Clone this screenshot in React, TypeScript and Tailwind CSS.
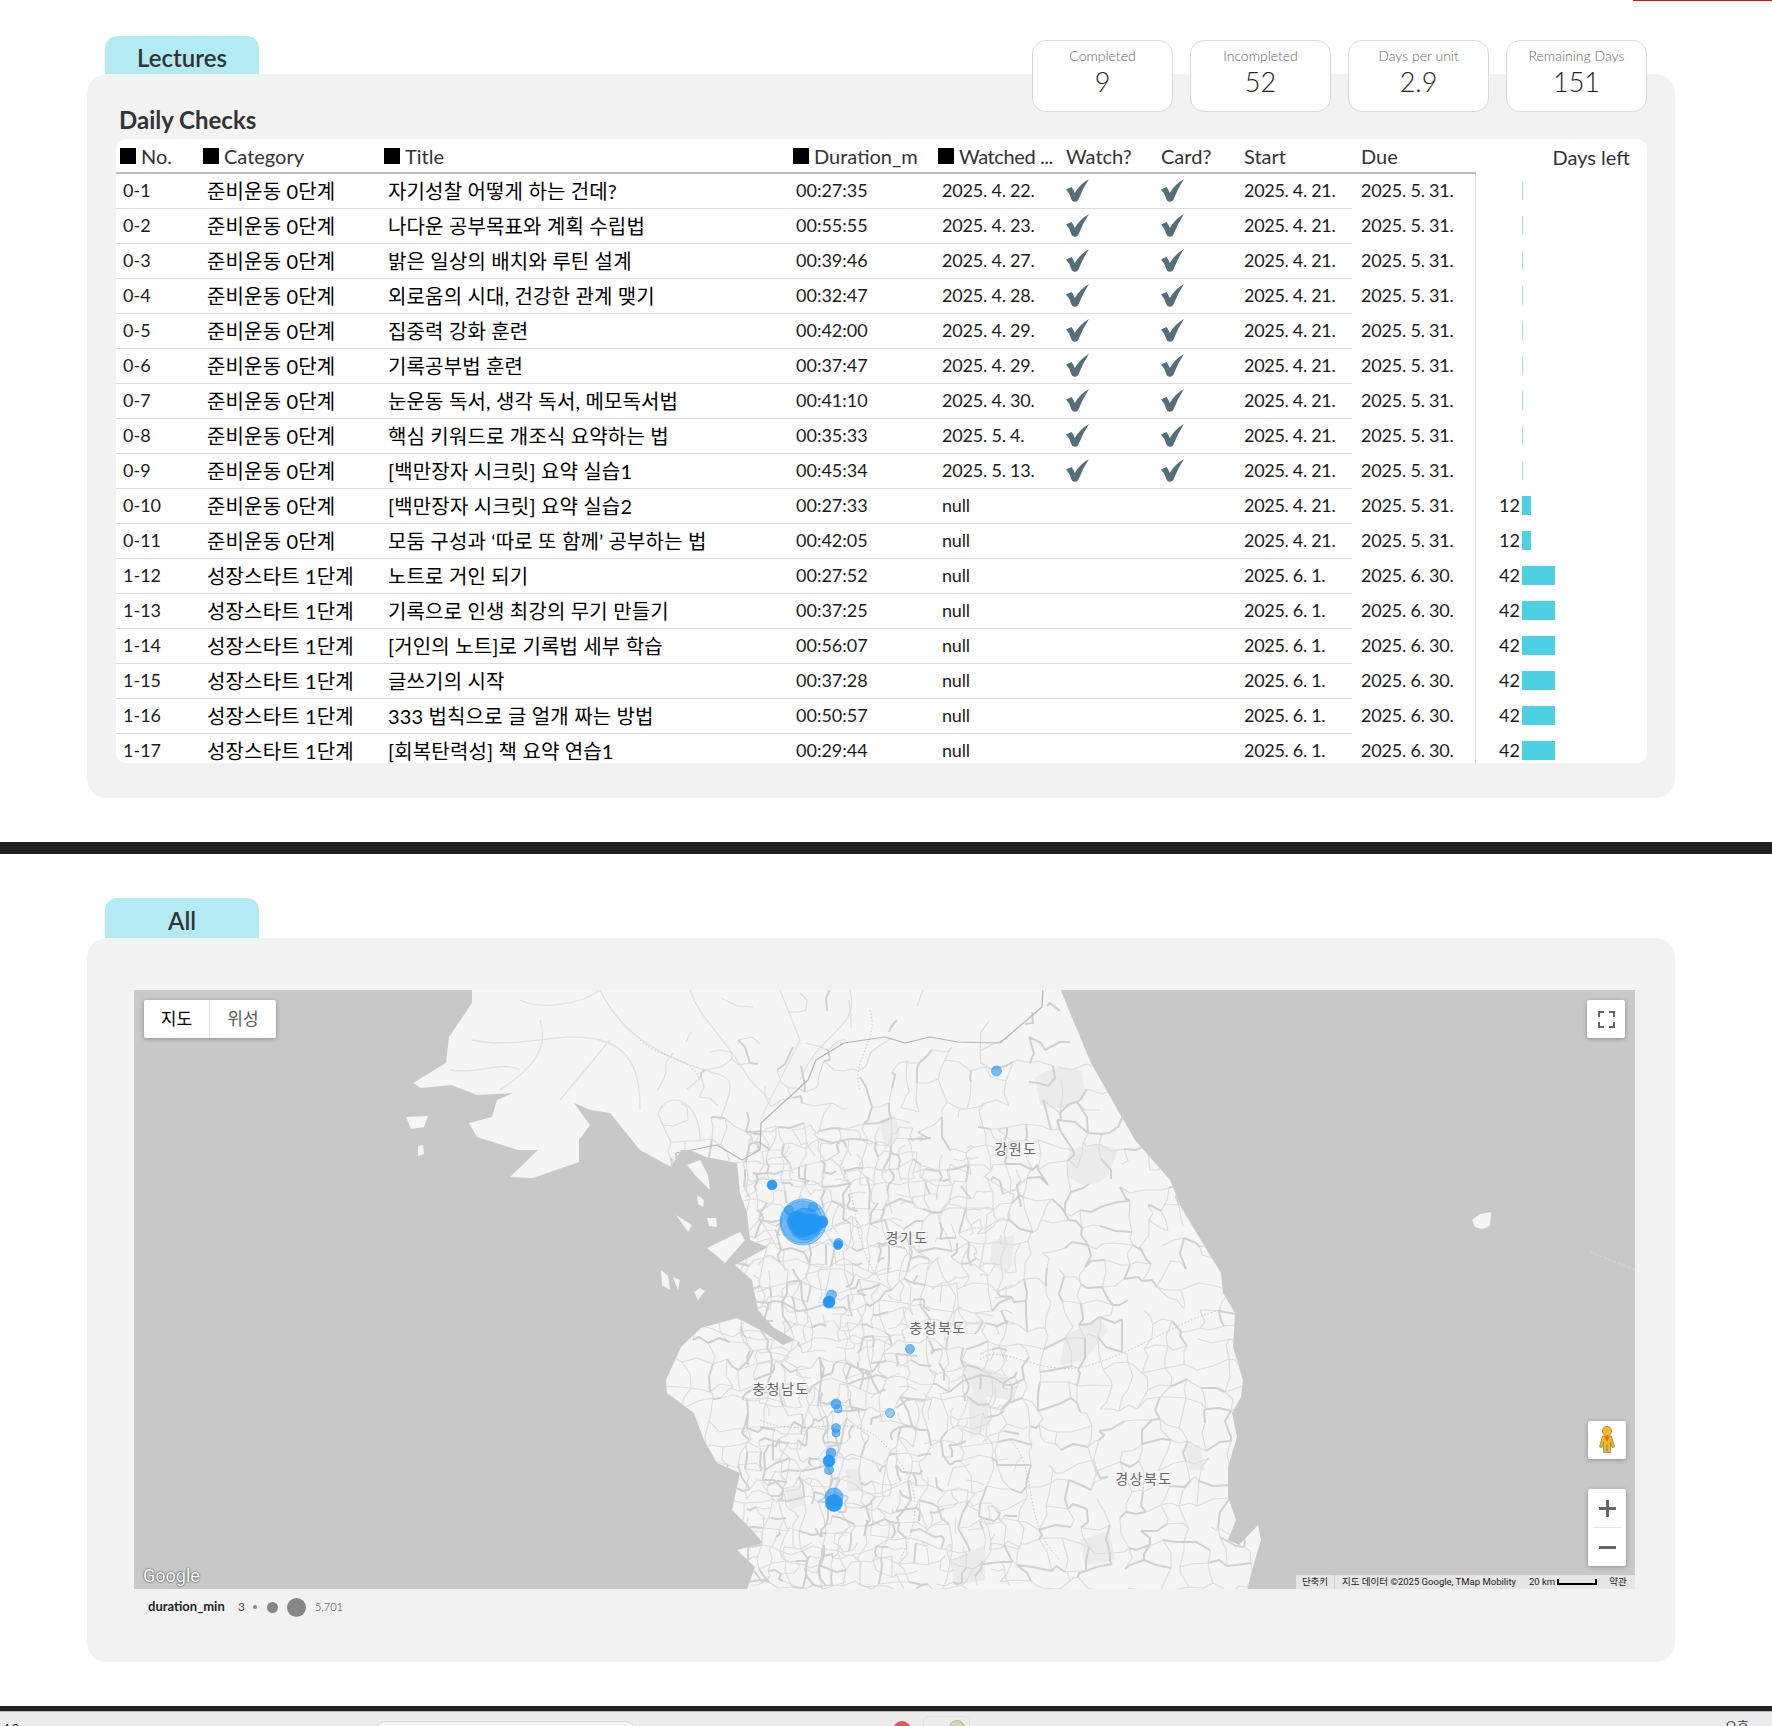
const rows: [string, string, string, string, string, boolean, string, string, number][] = [
  ['0-1', '준비운동 0단계', '자기성찰 어떻게 하는 건데?', '00:27:35', '2025. 4. 22.', true, '2025. 4. 21.', '2025. 5. 31.', 0],
  ['0-2', '준비운동 0단계', '나다운 공부목표와 계획 수립법', '00:55:55', '2025. 4. 23.', true, '2025. 4. 21.', '2025. 5. 31.', 0],
  ['0-3', '준비운동 0단계', '밝은 일상의 배치와 루틴 설계', '00:39:46', '2025. 4. 27.', true, '2025. 4. 21.', '2025. 5. 31.', 0],
  ['0-4', '준비운동 0단계', '외로움의 시대, 건강한 관계 맺기', '00:32:47', '2025. 4. 28.', true, '2025. 4. 21.', '2025. 5. 31.', 0],
  ['0-5', '준비운동 0단계', '집중력 강화 훈련', '00:42:00', '2025. 4. 29.', true, '2025. 4. 21.', '2025. 5. 31.', 0],
  ['0-6', '준비운동 0단계', '기록공부법 훈련', '00:37:47', '2025. 4. 29.', true, '2025. 4. 21.', '2025. 5. 31.', 0],
  ['0-7', '준비운동 0단계', '눈운동 독서, 생각 독서, 메모독서법', '00:41:10', '2025. 4. 30.', true, '2025. 4. 21.', '2025. 5. 31.', 0],
  ['0-8', '준비운동 0단계', '핵심 키워드로 개조식 요약하는 법', '00:35:33', '2025. 5. 4.', true, '2025. 4. 21.', '2025. 5. 31.', 0],
  ['0-9', '준비운동 0단계', '[백만장자 시크릿] 요약 실습1', '00:45:34', '2025. 5. 13.', true, '2025. 4. 21.', '2025. 5. 31.', 0],
  ['0-10', '준비운동 0단계', '[백만장자 시크릿] 요약 실습2', '00:27:33', 'null', false, '2025. 4. 21.', '2025. 5. 31.', 12],
  ['0-11', '준비운동 0단계', '모둠 구성과 ‘따로 또 함께’ 공부하는 법', '00:42:05', 'null', false, '2025. 4. 21.', '2025. 5. 31.', 12],
  ['1-12', '성장스타트 1단계', '노트로 거인 되기', '00:27:52', 'null', false, '2025. 6. 1.', '2025. 6. 30.', 42],
  ['1-13', '성장스타트 1단계', '기록으로 인생 최강의 무기 만들기', '00:37:25', 'null', false, '2025. 6. 1.', '2025. 6. 30.', 42],
  ['1-14', '성장스타트 1단계', '[거인의 노트]로 기록법 세부 학습', '00:56:07', 'null', false, '2025. 6. 1.', '2025. 6. 30.', 42],
  ['1-15', '성장스타트 1단계', '글쓰기의 시작', '00:37:28', 'null', false, '2025. 6. 1.', '2025. 6. 30.', 42],
  ['1-16', '성장스타트 1단계', '333 법칙으로 글 얼개 짜는 방법', '00:50:57', 'null', false, '2025. 6. 1.', '2025. 6. 30.', 42],
  ['1-17', '성장스타트 1단계', '[회복탄력성] 책 요약 연습1', '00:29:44', 'null', false, '2025. 6. 1.', '2025. 6. 30.', 42],
];

const stats = [
  ['Completed', '9'],
  ['Incompleted', '52'],
  ['Days per unit', '2.9'],
  ['Remaining Days', '151'],
];

const LAND =
  'M472 985 L1059 985 L1070 1013 L1091 1063 L1116 1107 L1135 1140 L1170 1180 L1181 1207 L1205 1247 L1221 1273 L1223 1293 L1235 1313 L1233 1347 L1243 1380 L1241 1397 L1232 1413 L1237 1437 L1228 1467 L1228 1497 L1236 1520 L1228 1540 L1239 1545 L1258 1525 L1261 1540 L1252 1570 L1246 1595 L745 1595 L755 1567 L737 1550 L763 1543 L752 1530 L732 1510 L740 1473 L717 1463 L704 1440 L694 1413 L667 1393 L666 1380 L681 1347 L701 1328 L737 1318 L760 1330 L783 1345 L795 1340 L773 1327 L758 1310 L752 1280 L735 1265 L768 1247 L750 1240 L747 1213 L740 1193 L737 1163 L706 1157 L690 1150 L681 1150 L671 1167 L640 1150 L610 1113 L590 1110 L574 1103 L590 1125 L579 1140 L579 1162 L533 1178 L510 1177 L538 1150 L518 1150 L477 1137 L469 1123 L492 1117 L497 1100 L513 1093 L477 1095 L451 1085 L421 1088 L413 1083 L446 1063 L449 1037 L472 1003 Z';

// small islands off the coast, hand-placed
const ISLANDS = [
  'M1472 1220 L1480 1214 L1491 1212 L1490 1226 L1482 1229 L1475 1227 Z',
  'M406 1117 L428 1116 L424 1127 L411 1129 Z',
  'M418 1146 L423 1145 L424 1154 L418 1156 Z',
  'M707 1218 L716 1218 L717 1227 L709 1226 Z',
  'M707 1248 L740 1232 L745 1240 L725 1263 Z',
  'M661 1270 L668 1276 L670 1290 L662 1285 Z',
  'M673 1277 L680 1280 L678 1290 Z',
  'M694 1292 L700 1288 L705 1291 L698 1300 Z',
  'M687 1165 L700 1160 L708 1175 L710 1190 L695 1175 Z',
  'M697 1195 L704 1200 L703 1207 L698 1204 Z',
  'M676 1215 L692 1225 L688 1232 Z',
];

const PARKS = [
  'M1035 1078 Q1060 1060 1082 1072 L1085 1095 Q1068 1115 1040 1105 Z',
  'M1070 1150 Q1100 1140 1118 1150 L1108 1175 Q1090 1195 1066 1175 Z',
  'M992 1240 L1014 1235 L1012 1265 L1005 1275 L990 1262 Z',
  'M1065 1335 L1100 1318 L1108 1330 L1085 1360 L1060 1365 Z',
  'M880 1120 L895 1115 L900 1135 L885 1150 Z',
  'M960 1360 L1005 1375 L1010 1400 L975 1395 Z',
  'M968 1395 L985 1385 L990 1425 L970 1440 Z',
  'M1185 1445 L1200 1445 L1205 1470 L1190 1470 Z',
  'M785 1488 L800 1485 L805 1505 L790 1510 Z',
  'M845 1470 L860 1468 L862 1490 L848 1492 Z',
  'M1080 1540 L1110 1530 L1115 1560 L1085 1565 Z',
  'M950 1560 L985 1545 L985 1580 L955 1585 Z',
];

// road web: jittered grids clipped to the land, densest in the west-centre
function buildRoads() {
  let seed = 4711;
  const rnd = () => {
    seed = (seed + 0x6d2b79f5) | 0;
    let t = Math.imul(seed ^ (seed >>> 15), 1 | seed);
    t = (t + Math.imul(t ^ (t >>> 7), 61 | t)) ^ t;
    return ((t ^ (t >>> 14)) >>> 0) / 4294967296;
  };
  const major: string[] = [];
  const minor: string[] = [];
  const seg = (a: [number, number], b: [number, number], wob: number) => {
    const mx = (a[0] + b[0]) / 2 + (rnd() - 0.5) * wob;
    const my = (a[1] + b[1]) / 2 + (rnd() - 0.5) * wob;
    return `M${a[0].toFixed(0)} ${a[1].toFixed(0)} L${mx.toFixed(0)} ${my.toFixed(0)} L${b[0].toFixed(0)} ${b[1].toFixed(0)}`;
  };
  const grid = (x0: number, y0: number, cols: number, lines: number, step: number, keep: (x: number, y: number) => number) => {
    const pts: [number, number][][] = [];
    for (let r = 0; r < lines; r++) {
      const row: [number, number][] = [];
      for (let c = 0; c < cols; c++) {
        row.push([x0 + c * step + (rnd() - 0.5) * step * 0.8, y0 + r * step + (rnd() - 0.5) * step * 0.8]);
      }
      pts.push(row);
    }
    for (let r = 0; r < lines; r++) {
      for (let c = 0; c < cols; c++) {
        const p = pts[r][c];
        const k = keep(p[0], p[1]);
        if (c + 1 < cols && rnd() < k) (rnd() < 0.28 ? major : minor).push(seg(p, pts[r][c + 1], step * 0.5));
        if (r + 1 < lines && rnd() < k) (rnd() < 0.28 ? major : minor).push(seg(p, pts[r + 1][c], step * 0.5));
      }
    }
  };
  grid(665, 985, 30, 31, 20, (x, y) => (y < 1045 ? 0.15 : y < 1125 ? 0.55 : x > 1010 ? 0.8 : 0.9));
  grid(745, 1130, 22, 36, 13, (x) => (x < 900 ? 0.55 : 0.38));
  return { major: major.join(' '), minor: minor.join(' ') };
}

const roads = buildRoads();

const NORTH_ROADS =
  'M472 1040 C520 1050 560 1030 600 1040 S640 1090 640 1110 M500 1090 C530 1070 550 1050 540 1020 M600 990 C620 1030 650 1050 690 1065 S740 1070 720 1120 M690 990 C700 1020 720 1030 750 1080 L770 1100 M780 990 L800 1040 L760 1120 M850 990 C860 1030 820 1030 800 1080 M560 1100 L610 1040 M660 1110 C670 1090 700 1100 700 1140 M520 1000 C540 1010 580 1005 600 990 M450 1070 C480 1075 500 1060 520 1070';

const DOTTED =
  'M870 1010 C880 1040 850 1060 860 1090 M640 1040 C660 1060 690 1055 700 1080 M980 1360 C1000 1340 1040 1380 1090 1365 S1180 1320 1220 1310 M760 1420 C800 1440 850 1410 880 1440 S930 1500 900 1560 M1010 1440 C1040 1470 1020 1520 1060 1560 M840 1160 C860 1200 850 1240 880 1280';

const BORDER =
  'M1043 985 L1042 1007 L1000 1043 L958 1042 L930 1037 L905 1043 L885 1037 L844 1043 L816 1060 L808 1080 L761 1123 L760 1150 L742 1160 L717 1145 L676 1153 L676 1172';

const BUBBLES: [number, number, number, number][] = [
  [803, 1222, 23, 0.42],
  [802, 1222, 21, 0.35],
  [805, 1224, 16, 0.55],
  [797, 1221, 10, 0.9],
  [803, 1225, 12, 0.9],
  [812, 1224, 10, 0.9],
  [822, 1222, 6, 0.9],
  [789, 1210, 4.5, 0.5],
  [813, 1207, 4.5, 0.5],
  [772, 1185, 5, 0.95],
  [838.5, 1243, 4.5, 0.6],
  [838, 1245, 4.5, 0.9],
  [831.5, 1295, 5, 0.6],
  [829, 1302, 6, 1],
  [910, 1349, 4.5, 0.6],
  [996.5, 1071, 5, 0.6],
  [836, 1404, 5, 0.7],
  [838, 1409, 4, 0.45],
  [890, 1413, 4.5, 0.45],
  [836, 1428, 4.5, 0.6],
  [836, 1433, 4, 0.6],
  [831, 1453, 5, 0.7],
  [829, 1461, 6, 0.95],
  [829, 1470, 4.5, 0.6],
  [834, 1497, 9, 0.6],
  [834, 1503, 8.5, 0.95],
];

const LABELS: [string, number, number][] = [
  ['강원도', 1016, 1154],
  ['경기도', 907, 1243],
  ['충청북도', 938, 1333],
  ['충청남도', 781, 1394],
  ['경상북도', 1144, 1484],
];

function Check() {
  return (
    <svg width="23" height="23" viewBox="0 0 23 23" className="block">
      <path d="M0 10.5 L5.5 8 Q7.5 10.5 8.8 14 Q14 5 23 0 Q17 9 12.5 20.5 Q11.5 23 8.5 22.8 Q5.8 22.5 5 19.5 Q3.5 14 0 10.5 Z" fill="#546e7a" />
    </svg>
  );
}

function Tab({ label, className }: { label: string; className: string }) {
  return (
    <div className={`ml-[105px] flex w-[154px] items-center justify-center rounded-t-[12px] bg-[#b2ebf2] pt-[5px] text-[24px] font-semibold text-[#333] ${className}`}>
      {label}
    </div>
  );
}

function Head({ label, box, className }: { label: string; box?: boolean; className: string }) {
  return (
    <div className={`flex shrink-0 items-center pl-[3px] ${className}`}>
      {box && <span className="mr-[5px] h-4 w-4 shrink-0 bg-black" />}
      {label}
    </div>
  );
}

function Row({ r }: { r: (typeof rows)[number] }) {
  const [no, cat, title, dur, watched, done, start, due, left] = r;
  return (
    <div className="flex h-[35px] shrink-0 text-[18px] text-[#1c1c1c]">
      <div className="flex h-full w-[1236px] shrink-0 items-center border-b border-[#dcdcdc] pb-[1px]">
        <div className="w-[84px] shrink-0 pl-[7px]">{no}</div>
        <div className="w-[181px] shrink-0 pl-[7px] text-[20px] tracking-[0.15px] text-black">{cat}</div>
        <div className="w-[409px] shrink-0 pl-[7px] text-[20px] tracking-[0.15px] text-black">{title}</div>
        <div className="w-[145px] shrink-0 pl-[6px]">{dur}</div>
        <div className="w-[128px] shrink-0 pl-[7px] tracking-[-0.2px]">{watched}</div>
        <div className="w-[95px] shrink-0 pl-[3px]">{done && <Check />}</div>
        <div className="w-[83px] shrink-0 pl-[3px]">{done && <Check />}</div>
        <div className="w-[111px] shrink-0 pl-[3px] tracking-[-0.3px]">{start}</div>
      </div>
      <div className="flex h-full w-[124px] shrink-0 items-center border-r border-[#d8d8d8] pb-[2px] pl-[9px] tracking-[-0.2px]">{due}</div>
      <div className="flex h-full flex-1 items-center pb-[2px]">
        <div className="w-[44px] shrink-0 text-right">{left > 0 ? left : ''}</div>
        <div
          className={`ml-[2px] h-[19px] ${left > 0 ? 'bg-[#4dd0e1]' : 'bg-[#a5e3ec]'}`}
          style={{ width: left > 0 ? Math.round(left * 0.79) : 1 }}
        />
      </div>
    </div>
  );
}

function MapCanvas() {
  return (
    <svg viewBox="134 990 1501 599" className="block h-full w-full">
      <defs>
        <clipPath id="land">
          <path d={LAND} />
        </clipPath>
      </defs>
      <rect x="134" y="990" width="1501" height="599" fill="#c8c8c8" />
      <path d={LAND} fill="#f5f5f5" />
      {ISLANDS.map((d) => (
        <path key={d} d={d} fill="#f5f5f5" />
      ))}
      <path d="M1590 1252 L1635 1270" stroke="#d8d8d8" strokeWidth="1" strokeDasharray="3 2" fill="none" />
      <g clipPath="url(#land)" fill="none" strokeLinejoin="round">
        {PARKS.map((d) => (
          <path key={d} d={d} fill="#ebebeb" />
        ))}
        <path d={NORTH_ROADS} stroke="#e0e0e0" strokeWidth="1.3" />
        <path d={roads.minor} stroke="#dcdcdc" strokeWidth="1.2" />
        <path d={roads.major} stroke="#d0d0d0" strokeWidth="2" />
        <path d={DOTTED} stroke="#c6c6c6" strokeWidth="1" strokeDasharray="1.5 2" />
        <path d={BORDER} stroke="#b4b4b4" strokeWidth="1.2" />
      </g>
      {BUBBLES.map(([cx, cy, r, o]) => (
        <circle key={`${cx}-${cy}-${r}`} cx={cx} cy={cy} r={r} fill="#2196f3" fillOpacity={o} stroke="#2196f3" strokeOpacity={0.7} strokeWidth="0.8" />
      ))}
      {LABELS.map(([t, x, y]) => (
        <text
          key={t}
          x={x}
          y={y}
          textAnchor="middle"
          fontSize="14"
          letterSpacing="1.5"
          fill="#666"
          stroke="#f5f5f5"
          strokeWidth="2.5"
          paintOrder="stroke"
          fontFamily="'Noto Sans CJK KR', sans-serif"
        >
          {t}
        </text>
      ))}
    </svg>
  );
}

function Pegman() {
  return (
    <svg width="38" height="38" viewBox="0 0 38 38">
      <circle cx="19" cy="10" r="4.6" fill="#fdb913" stroke="#8d8168" strokeWidth="0.8" />
      <path d="M14.5 15 L23.5 15 L26.5 26 L24 26.5 L22.5 21 L22.5 31.5 L19.6 31.5 L19.6 24 L18.4 24 L18.4 31.5 L15.5 31.5 L15.5 21 L14 26.5 L11.5 26 Z" fill="#fdb913" stroke="#8d8168" strokeWidth="0.8" />
      <path d="M16 15.5 L22 15.5 L19 21 Z" fill="#e8710a" />
    </svg>
  );
}

function FullscreenIcon() {
  return (
    <svg width="17" height="17" viewBox="0 0 17 17" fill="none" stroke="#666" strokeWidth="2">
      <path d="M1 6 V1 H6 M11 1 H16 V6 M16 11 V16 H11 M6 16 H1 V11" />
    </svg>
  );
}

function App() {
  return (
    <div className="relative h-[1726px] w-[1772px] overflow-hidden bg-white font-['Lato','Noto_Sans_CJK_KR',sans-serif]">
      <div className="absolute right-0 top-0 h-px w-[139px] bg-[#ff0000]" />
      <div className="h-9" />
      <Tab label="Lectures" className="h-[38px]" />

      <div className="relative ml-[87px] h-[724px] w-[1588px] rounded-[20px] bg-[#f2f2f2]">
        <div className="absolute -top-[34px] right-[28px] flex gap-[17px]">
          {stats.map(([label, value]) => (
            <div key={label} className="flex h-[72px] w-[141px] flex-col items-center rounded-[14px] border border-[#d9d9d9] bg-white pt-[5px]">
              <div className="text-[14px] font-light leading-[20px] text-[#666]">{label}</div>
              <div className="text-[27px] font-light leading-[32px] text-[#222]">{value}</div>
            </div>
          ))}
        </div>
        <div className="flex h-[65px] items-end pb-[4px] pl-[32px] text-[24px] font-bold leading-[30px] text-[#333]">Daily Checks</div>
        <div className="ml-[29px] flex h-[624px] w-[1531px] flex-col overflow-hidden rounded-[10px] bg-white">
          <div className="flex h-[35px] shrink-0 text-[20px] text-[#333]">
            <div className="flex w-[1360px] shrink-0 border-b-2 border-[#bdbdbd]">
              <Head label="No." box className="w-[84px] pl-[4px]" />
              <Head label="Category" box className="w-[181px]" />
              <Head label="Title" box className="w-[409px]" />
              <Head label="Duration_m" box className="w-[145px]" />
              <Head label="Watched ..." box className="w-[128px] tracking-[-0.4px]" />
              <Head label="Watch?" className="w-[95px]" />
              <Head label="Card?" className="w-[83px]" />
              <Head label="Start" className="w-[117px]" />
              <Head label="Due" className="w-[118px]" />
            </div>
            <div className="flex flex-1 items-center justify-end pr-[17px]">Days left</div>
          </div>
          {rows.map((r) => (
            <Row key={r[0]} r={r} />
          ))}
        </div>
      </div>

      <div className="mt-[44px] h-3 bg-[#212121]" />
      <div className="h-[44px]" />
      <Tab label="All" className="h-[40px]" />

      <div className="ml-[87px] h-[724px] w-[1588px] rounded-[20px] bg-[#f2f2f2] pl-[47px] pt-[52px]">
        <div className="relative h-[599px] w-[1501px] overflow-hidden">
          <MapCanvas />
          <div className="absolute left-[10px] top-[10px] flex h-[38px] w-[132px] rounded-[2px] bg-white text-[17px] shadow-[0_1px_4px_rgba(0,0,0,0.3)]">
            <div className="flex w-[66px] items-center justify-center border-r border-[#e6e6e6] text-black">지도</div>
            <div className="flex w-[66px] items-center justify-center text-[#565656]">위성</div>
          </div>
          <div className="absolute right-[10px] top-[10px] flex h-[38px] w-[38px] items-center justify-center rounded-[2px] bg-white shadow-[0_1px_4px_rgba(0,0,0,0.3)]">
            <FullscreenIcon />
          </div>
          <div className="absolute right-[9px] top-[431px] h-[38px] w-[38px] rounded-[2px] bg-white shadow-[0_1px_4px_rgba(0,0,0,0.3)]">
            <Pegman />
          </div>
          <div className="absolute right-[9px] top-[499px] flex h-[77px] w-[38px] flex-col items-center rounded-[2px] bg-white shadow-[0_1px_4px_rgba(0,0,0,0.3)]">
            <svg width="17" height="17" viewBox="0 0 17 17" className="mt-[11px]">
              <path d="M7 0 H10 V7 H17 V10 H10 V17 H7 V10 H0 V7 H7 Z" fill="#666" />
            </svg>
            <div className="mt-[10px] h-px w-[29px] bg-[#e6e6e6]" />
            <div className="mt-[18px] h-[3px] w-[17px] bg-[#666]" />
          </div>
          <div className="absolute bottom-[3px] left-[9px] font-['Roboto',sans-serif] text-[18px] leading-[20px] text-white [text-shadow:0_0_2px_#444,0_0_1px_#444]">
            Google
          </div>
          <div className="absolute bottom-0 right-0 flex h-[14px] w-[339px] items-center bg-[#e6e6e6] font-['Roboto','Noto_Sans_CJK_KR',sans-serif] text-[9.5px] leading-none text-[#222]">
            <div className="flex h-full w-[39px] items-center justify-center border-r border-[#d0d0d0]">단축키</div>
            <div className="ml-[7px] w-[187px] shrink-0 whitespace-nowrap">지도 데이터 ©2025 Google, TMap Mobility</div>
            <div className="whitespace-nowrap">20 km</div>
            <div className="ml-[2px] h-[6px] w-[40px] border-x-2 border-b-2 border-black" />
            <div className="ml-[12px]">약관</div>
          </div>
        </div>

        <div className="flex h-[36px] items-center pl-[14px] text-[12px] text-[#444]">
          <div className="w-[90px] text-[13px] font-bold text-[#222]">duration_min</div>
          <div className="w-[14.5px]">3</div>
          <div className="h-1 w-1 rounded-full bg-[#868686]" />
          <div className="ml-[10px] h-[11px] w-[11px] rounded-full bg-[#868686]" />
          <div className="ml-[9px] h-[19px] w-[19px] rounded-full bg-[#868686]" />
          <div className="ml-[9.5px] text-[11px] font-light text-[#333]">5,701</div>
        </div>
      </div>

      <div className="mt-[44px] h-[5px] bg-[#212121]" />
      <div className="h-[15px] overflow-hidden border-t border-[#b5b5b5] bg-[#ececec]">
        <div className="flex items-start">
          <div className="mt-[10px] w-[375px] pl-[1px] text-[11px] leading-none">
            <span className="pl-[2px]">4:0</span>
          </div>
          <div className="mt-[9px] h-5 w-[260px] rounded-t-[10px] border border-[#dcdcdc] bg-[#f4f4f4]" />
          <div className="ml-[258px] mt-[9px] h-[18px] w-[18px] rounded-full bg-[#e45757]" />
          <div className="ml-[12px] mt-[4px] flex h-6 w-[47px] rounded-t-[6px] border border-[#e2e2e2] pl-[25px]">
            <div className="mt-[3px] h-4 w-4 shrink-0 rounded-full border border-[#b7bc93] bg-[#d3d6b4]" />
          </div>
          <div className="ml-[755px] mt-[8px] text-[13px] leading-none text-[#333]">오후</div>
        </div>
      </div>
    </div>
  );
}

export default App;
